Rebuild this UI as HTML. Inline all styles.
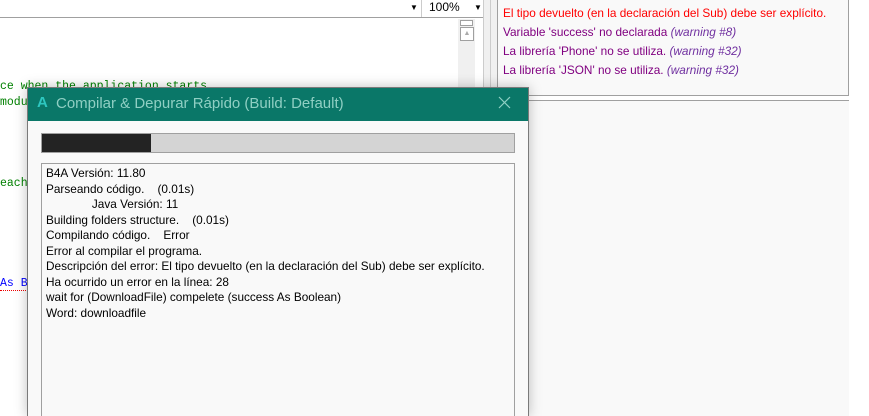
<!DOCTYPE html>
<html><head><meta charset="utf-8"><style>
*{margin:0;padding:0;box-sizing:border-box}
html,body{width:869px;height:416px;overflow:hidden}
body{background:#fff;font-family:"Liberation Sans",sans-serif;position:relative}
.abs{position:absolute}
.code{font-family:"Liberation Mono",monospace;font-size:11.5px;color:#008000;white-space:pre}
.err div{font-size:11.8px;line-height:19px;color:#800080;white-space:nowrap}
.err i{color:#7030a0}
.log div{font-size:11.8px;line-height:15.5px;color:#000;white-space:pre}
</style></head><body>
<div class="abs" style="left:0;top:0;width:483px;height:18px;background:#fff;border-bottom:1px solid #a0a0a0"></div>
<div class="abs" style="left:0;top:0;width:422px;height:17px;border-right:1px solid #ccc;background:#fff"></div>
<div class="abs" style="left:410px;top:3px;font-size:8px">▼</div>
<div class="abs" style="left:424px;top:0;width:59px;height:17px;background:#fff;font-size:12px;padding-left:5px;line-height:15px">100%</div>
<div class="abs" style="left:474px;top:3px;font-size:8px">▼</div>
<div class="abs" style="left:0;top:19px;width:458px;height:397px;background:#fff"></div>
<div class="abs" style="left:458px;top:19px;width:17px;height:397px;background:#f0f0f0"></div>
<div class="abs" style="left:460px;top:20px;width:13px;height:6px;border:1px solid #a0a0a0;background:#fff"></div>
<div class="abs" style="left:460px;top:27px;width:14px;height:14px;border:1px solid #a0a0a0;background:#fff;font-size:7px;color:#aaa;text-align:center;line-height:12px">▲</div>
<div class="abs" style="left:475px;top:19px;width:8px;height:397px;background:#fff"></div>
<div class="abs" style="left:483px;top:0;width:14px;height:416px;background:#f0f0f0;border-left:1px solid #ccc"></div>
<div class="abs" style="left:490px;top:0;width:1px;height:416px;background:#ccc"></div>
<div class="code abs" style="left:0;top:80px">ce when the application starts</div>
<div class="code abs" style="left:0;top:96px">modul</div>
<div class="code abs" style="left:0;top:177px">each</div>
<div class="code abs" style="left:0;top:277px;color:#00f">As B</div>
<div class="abs" style="left:0;top:290px;width:28px;border-bottom:1px dotted #e00"></div>
<div class="abs" style="left:497px;top:0;width:352px;height:96px;background:#f9f9f9;border:1px solid #a0a0a0;border-top:none"></div>
<div class="abs" style="left:497px;top:100px;width:352px;height:316px;background:#f9f9f9;border-top:1px solid #a0a0a0"></div>
<div class="abs err" style="left:503px;top:4px">
<div style="color:#f00">El tipo devuelto (en la declaración del Sub) debe ser explícito.</div>
<div>Variable 'success' no declarada <i>(warning #8)</i></div>
<div>La librería 'Phone' no se utiliza. <i>(warning #32)</i></div>
<div>La librería 'JSON' no se utiliza. <i>(warning #32)</i></div>
</div>
<div class="abs" style="left:27px;top:87px;width:502px;height:329px;background:#f9f9f9;border:1px solid #7a7a7a;border-bottom:none;box-shadow:0 0 12px rgba(0,0,0,.25)"></div>
<div class="abs" style="left:28px;top:88px;width:500px;height:33px;background:#0a7768"></div>
<div class="abs" style="left:37px;top:94px;font-size:15px;font-weight:bold;color:#2ec7c0">A</div>
<div class="abs" style="left:56px;top:95px;font-size:15px;color:#8fcfc3">Compilar &amp; Depurar Rápido (Build: Default)</div>
<svg class="abs" style="left:498px;top:96px" width="13" height="13"><path d="M1 1L12 12M12 1L1 12" stroke="#8fcfc3" stroke-width="1.2"/></svg>
<div class="abs" style="left:41px;top:133px;width:474px;height:20px;background:#d4d4d4;border:1px solid #a0a0a0"></div>
<div class="abs" style="left:42px;top:134px;width:109px;height:18px;background:#232323"></div>
<div class="abs" style="left:41px;top:163px;width:474px;height:253px;background:#f9f9f9;border:1px solid #a0a0a0;border-bottom:none"></div>
<div class="abs log" style="left:46px;top:166px">
<div>B4A Versión: 11.80</div>
<div>Parseando código.    (0.01s)</div>
<div>              Java Versión: 11</div>
<div>Building folders structure.    (0.01s)</div>
<div>Compilando código.    Error</div>
<div>Error al compilar el programa.</div>
<div>Descripción del error: El tipo devuelto (en la declaración del Sub) debe ser explícito.</div>
<div>Ha ocurrido un error en la línea: 28</div>
<div>wait for (DownloadFile) compelete (success As Boolean)</div>
<div>Word: downloadfile</div>
</div>
</body></html>
